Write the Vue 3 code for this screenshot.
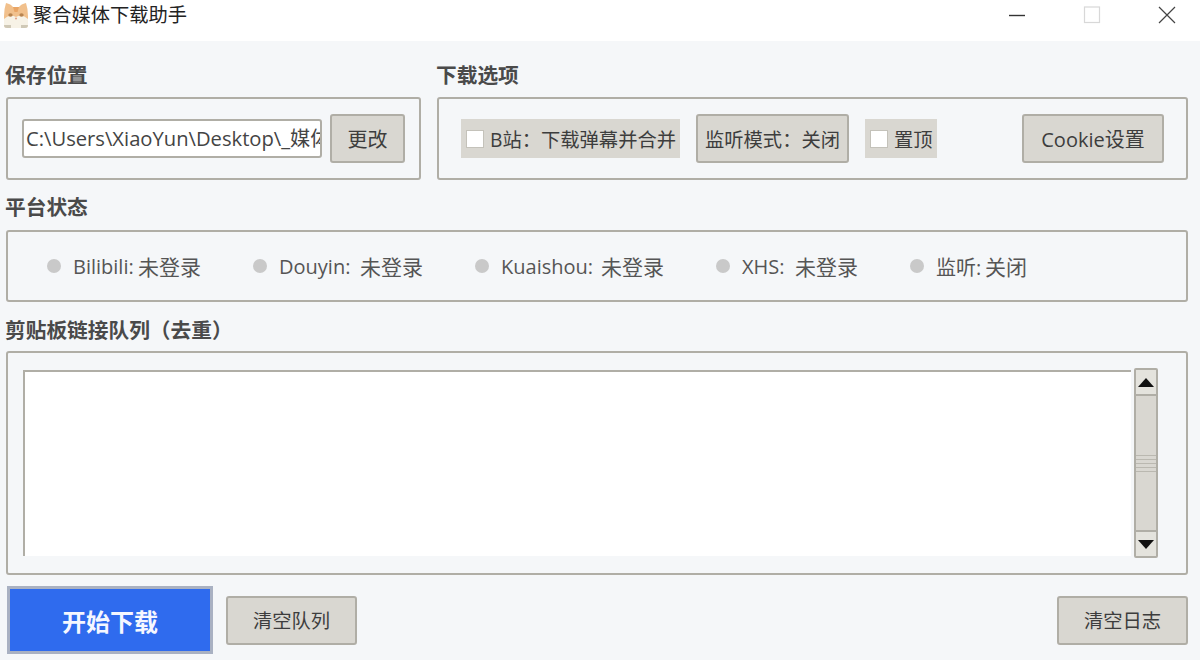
<template>
  <div class="window">
    <div class="titlebar">
      <svg class="app-icon" width="28" height="28" viewBox="0 0 28 28">
        <path d="M4 2 Q9 3 11 6 H17 Q19 3 24 2 Q26 8 26 15 V24 Q26 27 23 27 H5 Q2 27 2 24 V15 Q2 8 4 2 Z" fill="#f1c08c" />
        <path d="M11 6 H17 L15.5 11 H12.5 Z" fill="#e9a565" />
        <path d="M2 18 Q8 12 14 16 Q20 12 26 18 V24 Q26 27 23 27 H5 Q2 27 2 24 Z" fill="#f7f2e6" />
        <path d="M2 24 H9 V27 H5 Q2 27 2 24 Z M19 24 H26 Q26 27 23 27 H19 Z" fill="#cfc8b6" />
        <ellipse cx="8.5" cy="14" rx="2.2" ry="1.8" fill="#b88450" />
        <ellipse cx="19.5" cy="14" rx="2.2" ry="1.8" fill="#b88450" />
        <circle cx="14" cy="17.5" r="1.1" fill="#e3a48a" />
      </svg>
      <span class="app-name">聚合媒体下载助手</span>
      <div class="win-controls">
        <svg width="18" height="18" viewBox="0 0 18 18"><path d="M1 9.5 H17" stroke="#333" stroke-width="1.4" /></svg>
        <svg width="18" height="18" viewBox="0 0 18 18"><rect x="1.5" y="1" width="15" height="15.5" fill="none" stroke="#d8d8d8" stroke-width="1.2" /></svg>
        <svg width="18" height="18" viewBox="0 0 18 18"><path d="M1 1 L17 17 M17 1 L1 17" stroke="#444" stroke-width="1.2" /></svg>
      </div>
    </div>

    <div class="main">
      <div class="top-row">
        <section class="save-section">
          <h4>保存位置</h4>
          <div class="group save-group">
            <input class="path-input" readonly value="C:\Users\XiaoYun\Desktop\_媒体下载" />
            <button class="btn change-btn">更改</button>
          </div>
        </section>
        <section class="options-section">
          <h4>下载选项</h4>
          <div class="group options-group">
            <label class="check check-danmaku"><i class="box"></i>B站：下载弹幕并合并</label>
            <button class="btn listen-btn">监听模式：关闭</button>
            <label class="check check-top"><i class="box"></i>置顶</label>
            <button class="btn cookie-btn">Cookie设置</button>
          </div>
        </section>
      </div>

      <h4 class="status-title">平台状态</h4>
      <div class="group status-group">
        <div
          class="status-item"
          v-for="item in platforms"
          :key="item.name"
          :style="{ width: item.width + 'px' }"
        >
          <span class="dot"></span>
          <span class="platform" :style="{ width: item.nameWidth + 'px' }">{{ item.name }}:</span>
          <span class="state">{{ item.state }}</span>
        </div>
      </div>

      <h4 class="queue-title">剪贴板链接队列（去重）</h4>
      <div class="group queue-group">
        <div class="queue-text"></div>
        <div class="scrollbar">
          <div class="arrow"><i class="tri up"></i></div>
          <div class="thumb"><span class="grip"></span></div>
          <div class="arrow"><i class="tri down"></i></div>
        </div>
      </div>

      <div class="actions">
        <button class="start-btn">开始下载</button>
        <button class="btn clear-btn">清空队列</button>
        <button class="btn clear-btn log-btn">清空日志</button>
      </div>
    </div>
  </div>
</template>

<script setup>
const platforms = [
  { name: "Bilibili", state: "未登录", width: 206, nameWidth: 65 },
  { name: "Douyin", state: "未登录", width: 222, nameWidth: 81 },
  { name: "Kuaishou", state: "未登录", width: 241, nameWidth: 100 },
  { name: "XHS", state: "未登录", width: 194, nameWidth: 53 },
  { name: "监听", state: "关闭", width: 140, nameWidth: 49 },
];
</script>

<style>
html,
body {
  margin: 0;
  background: #f5f7f9;
}
</style>

<style scoped>
* {
  box-sizing: border-box;
}
.window {
  width: 1200px;
  height: 660px;
  overflow: hidden;
  background: #f5f7f9;
  color: #3d3d3d;
  font-family: "Open Sans", "Noto Sans CJK SC", sans-serif;
}
.titlebar {
  height: 41px;
  background: #fff;
  display: flex;
  align-items: flex-start;
  padding: 1px 24px 0 2px;
}
.app-icon {
  flex: none;
}
.app-name {
  margin-left: 3px;
  font-size: 19.25px;
  line-height: 28px;
  color: #222;
}
.win-controls {
  margin-left: auto;
  display: flex;
  gap: 57px;
  padding-top: 5px;
}
.main {
  padding: 0 12px 0 6px;
}
h4 {
  margin: 0 0 0 -1px;
  font-size: 20.7px;
  font-weight: 700;
  line-height: 28px;
  color: #4a4a4a;
}
.top-row {
  display: flex;
  gap: 16px;
  padding-top: 20px;
}
.save-section {
  width: 415px;
  flex: none;
}
.options-section {
  flex: 1;
}
.top-row h4 {
  height: 36px;
}
.group {
  border: 2px solid #b0aea6;
  border-radius: 3px;
  background: #f5f7f9;
}
.save-group,
.options-group {
  height: 83px;
  display: flex;
  align-items: center;
}
.save-group {
  padding: 0 14px;
  gap: 8px;
}
.path-input {
  width: 300px;
  height: 39px;
  background: #fff;
  border: 2px solid #b0aea6;
  border-radius: 3px;
  font-family: inherit;
  font-size: 20.2px;
  padding: 0 0 2px 2px;
  color: #444;
  outline: none;
}
.btn {
  height: 49px;
  background: #d9d7d1;
  border: 2px solid #b0aea6;
  border-radius: 3px;
  font-family: inherit;
  font-size: 20px;
  color: #3d3d3d;
  padding: 0;
}
.change-btn {
  width: 75px;
}
.options-group {
  padding: 0 22px;
}
.check {
  height: 39px;
  background: #d9d7d1;
  display: flex;
  align-items: center;
  font-size: 19.3px;
  white-space: nowrap;
  padding-left: 5px;
}
.box {
  width: 18px;
  height: 18px;
  background: #fff;
  border: 1px solid #c4c2ba;
  margin-right: 6px;
  flex: none;
}
.check-danmaku {
  width: 219px;
}
.listen-btn {
  width: 153px;
  margin-left: 16px;
  font-size: 19.3px;
}
.check-top {
  width: 72px;
  margin-left: 16px;
}
.cookie-btn {
  width: 142px;
  margin-left: auto;
}
.status-title {
  margin-top: 13px;
  height: 37px;
}
.status-group {
  height: 72px;
  display: flex;
  align-items: center;
  padding-left: 39px;
}
.status-item {
  display: flex;
  align-items: center;
  color: #555;
  white-space: nowrap;
  flex: none;
}
.platform {
  font-size: 20px;
  flex: none;
}
.state {
  font-size: 21px;
}
.dot {
  width: 14px;
  height: 14px;
  border-radius: 50%;
  background: #c9c9c9;
  margin-right: 12px;
  flex: none;
}
.queue-title {
  margin-top: 14px;
  height: 35px;
}
.queue-group {
  height: 224px;
  display: flex;
  padding: 17px 28px 15px 15px;
  gap: 3px;
}
.queue-text {
  flex: 1;
  background: #fff;
  border-top: 2px solid #b0aea6;
  border-left: 2px solid #b0aea6;
  margin-bottom: 2px;
}
.scrollbar {
  width: 24px;
  flex: none;
  display: flex;
  flex-direction: column;
  background: #d9d7d1;
  border: 2px solid #b0aea6;
  border-radius: 2px;
  margin-top: -2px;
}
.arrow {
  height: 24px;
  flex: none;
  background: #e4e3dd;
  display: flex;
  align-items: center;
  justify-content: center;
}
.tri {
  width: 0;
  height: 0;
  border-left: 8px solid transparent;
  border-right: 8px solid transparent;
}
.tri.up {
  border-bottom: 9px solid #111;
}
.tri.down {
  border-top: 9px solid #111;
}
.thumb {
  flex: 1;
  border-top: 2px solid #b0aea6;
  border-bottom: 2px solid #b0aea6;
  display: flex;
  align-items: center;
  justify-content: center;
}
.grip {
  width: 100%;
  height: 17px;
  background: repeating-linear-gradient(#bab8b0 0 1px, #d9d7d1 1px 4px);
}
.actions {
  display: flex;
  align-items: center;
  margin-top: 11px;
  padding-left: 1px;
}
.start-btn {
  width: 206px;
  height: 68px;
  background: #2f6bee;
  border: 3px solid #a9b1c2;
  color: #f5f7ff;
  font-family: inherit;
  font-size: 24px;
  font-weight: 700;
  padding: 0;
}
.clear-btn {
  width: 131px;
  margin-left: 13px;
  font-size: 19.3px;
}
.log-btn {
  margin-left: auto;
}
</style>
